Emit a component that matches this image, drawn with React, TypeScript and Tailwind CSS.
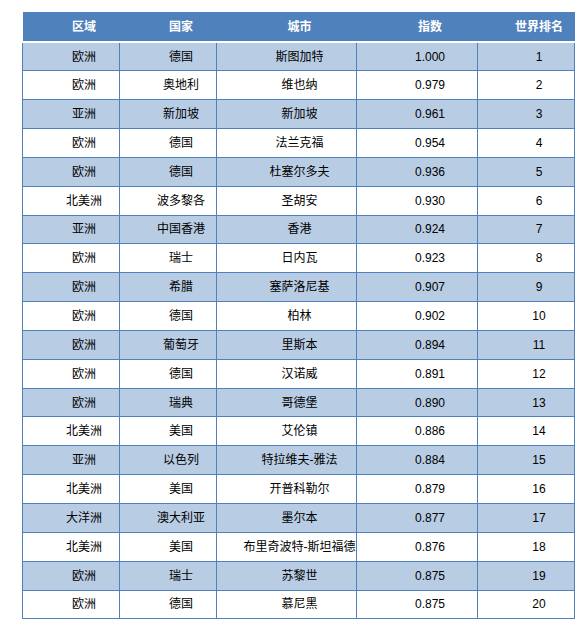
import React from "react";

type Row = [string, string, string, string, number];

const rows: Row[] = [
  ["欧洲", "德国", "斯图加特", "1.000", 1],
  ["欧洲", "奥地利", "维也纳", "0.979", 2],
  ["亚洲", "新加坡", "新加坡", "0.961", 3],
  ["欧洲", "德国", "法兰克福", "0.954", 4],
  ["欧洲", "德国", "杜塞尔多夫", "0.936", 5],
  ["北美洲", "波多黎各", "圣胡安", "0.930", 6],
  ["亚洲", "中国香港", "香港", "0.924", 7],
  ["欧洲", "瑞士", "日内瓦", "0.923", 8],
  ["欧洲", "希腊", "塞萨洛尼基", "0.907", 9],
  ["欧洲", "德国", "柏林", "0.902", 10],
  ["欧洲", "葡萄牙", "里斯本", "0.894", 11],
  ["欧洲", "德国", "汉诺威", "0.891", 12],
  ["欧洲", "瑞典", "哥德堡", "0.890", 13],
  ["北美洲", "美国", "艾伦镇", "0.886", 14],
  ["亚洲", "以色列", "特拉维夫-雅法", "0.884", 15],
  ["北美洲", "美国", "开普科勒尔", "0.879", 16],
  ["大洋洲", "澳大利亚", "墨尔本", "0.877", 17],
  ["北美洲", "美国", "布里奇波特-斯坦福德", "0.876", 18],
  ["欧洲", "瑞士", "苏黎世", "0.875", 19],
  ["欧洲", "德国", "慕尼黑", "0.875", 20],
];

const headers = ["区域", "国家", "城市", "指数", "世界排名"];
const widths = ["w-[97px]", "w-[97px]", "w-[140px]", "w-[121px]", "w-[97px]"];

const App: React.FC = () => {
  return (
    <div className="w-[582px] h-[633px] bg-white pt-[12px] pl-[22px]">
      <table
        className="border-collapse table-fixed w-[553px] text-[12px] text-black"
        style={{ fontFamily: '"Liberation Sans", Arial, "Noto Sans CJK SC", sans-serif' }}
      >
        <thead>
          <tr className="h-[30px] bg-[#4f81bd] border-b-2 border-white">
            {headers.map((h, i) => (
              <th key={h} className={`${widths[i]} pl-[26px] pr-0 text-center font-bold text-white leading-none`}>
                {h}
              </th>
            ))}
          </tr>
        </thead>
        <tbody>
          {rows.map((r, idx) => (
            <tr key={idx} className={`h-[28.85px] ${idx % 2 === 0 ? "bg-[#b8cce4]" : "bg-white"}`}>
              {r.map((c, i) => (
                <td key={i} className="border border-[#4f81bd] pl-[26px] pr-0 text-center leading-none whitespace-nowrap">
                  {c}
                </td>
              ))}
            </tr>
          ))}
        </tbody>
      </table>
    </div>
  );
};

export default App;
